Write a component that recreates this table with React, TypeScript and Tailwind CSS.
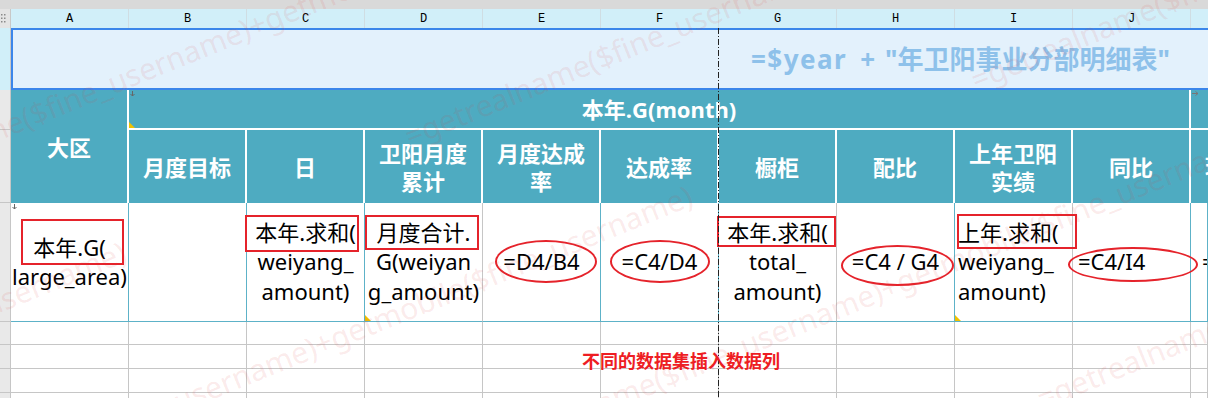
import React from 'react';

const WM = '=getrealname($fine_username)+getmobile($fine_username)';
const LETTERS = ['A', 'B', 'C', 'D', 'E', 'F', 'G', 'H', 'I', 'J'];

const rowHead = 'bg-[#e9e9e9] border-r border-b border-[#c6c6c6]';
const th =
  'bg-[#4eabc1] border-r-2 border-white flex flex-col items-center justify-center text-center text-white font-bold text-[22px] leading-[28px]';
const td =
  'relative border-r border-b border-b-[#5db2c8] flex flex-col justify-center text-[22px] leading-[29.5px] text-black';
const tealR = 'border-r-[#5db2c8]';
const grayR = 'border-r-[#c6c6c6]';
const redBox = 'absolute z-10 border-2 border-[#e5232b]';
const redOval = 'absolute z-10 border-2 border-[#e5232b] rounded-[50%]';

function DownMark() {
  return (
    <svg className="absolute left-[1px] top-[1px]" width="5" height="5" viewBox="0 0 5 5">
      <path d="M2.5 0V5M0.5 3L2.5 5L4.5 3" stroke="#666" strokeWidth="1" fill="none" />
    </svg>
  );
}

function RightMark() {
  return (
    <svg className="absolute left-[1px] top-[1px]" width="6" height="5" viewBox="0 0 6 5">
      <path d="M0 2.5H6M3.5 0.5L6 2.5L3.5 4.5" stroke="#777" strokeWidth="1" fill="none" />
    </svg>
  );
}

function Tri() {
  return (
    <span className="absolute left-0 bottom-0 w-0 h-0 border-b-[6px] border-b-[#f2c200] border-r-[6px] border-r-transparent" />
  );
}

function Grip() {
  return (
    <svg width="5" height="9" viewBox="0 0 5 9">
      <rect x="0" y="0" width="1.5" height="1.5" fill="#8a8a8a" />
      <rect x="3" y="0" width="1.5" height="1.5" fill="#8a8a8a" />
      <rect x="0" y="3.5" width="1.5" height="1.5" fill="#8a8a8a" />
      <rect x="3" y="3.5" width="1.5" height="1.5" fill="#8a8a8a" />
      <rect x="0" y="7" width="1.5" height="1.5" fill="#8a8a8a" />
      <rect x="3" y="7" width="1.5" height="1.5" fill="#8a8a8a" />
    </svg>
  );
}

function WmLine({ className, reps }: { className: string; reps: number }) {
  return (
    <div className={`absolute flex ${className}`}>
      {Array.from({ length: reps }).map((_, i) => (
        <div key={i} className="w-[1150px] shrink-0 whitespace-nowrap">
          {WM}
        </div>
      ))}
    </div>
  );
}

function Watermark() {
  return (
    <div className="pointer-events-none absolute inset-0 z-20 overflow-hidden">
      <div className="absolute left-0 top-0 origin-top-left rotate-[-22deg] text-[30px] leading-[36px] text-[rgba(220,60,60,0.11)] font-['Noto_Sans',sans-serif]">
        <WmLine className="left-[-1371px] top-[101px]" reps={3} />
        <WmLine className="left-[-1975px] top-[261px]" reps={4} />
        <WmLine className="left-[-1429px] top-[421px]" reps={3} />
        <WmLine className="left-[-2033px] top-[581px]" reps={4} />
        <WmLine className="left-[-1487px] top-[741px]" reps={4} />
      </div>
    </div>
  );
}

function EmptyRow() {
  return (
    <>
      <div className={rowHead} />
      {Array.from({ length: 11 }).map((_, i) => (
        <div key={i} className="border-r border-b border-[#c6c6c6]" />
      ))}
    </>
  );
}

export default function App() {
  return (
    <div className="relative w-[1208px] h-[398px] overflow-hidden bg-white font-['Noto_Sans','Noto_Sans_CJK_SC',sans-serif]">
      <div className="h-[9px] bg-[#d9d9d9]" />
      <div className="grid grid-cols-[11px_repeat(10,118px)_minmax(0,1fr)] grid-rows-[19px_62px_40px_73px_119px_23px_24px_24px_24px]">
        {/* column letters */}
        <div className="bg-[#e4e4e4] border-r border-[#c8c8c8] flex items-center pl-[1px]">
          <Grip />
        </div>
        {LETTERS.map((l) => (
          <div
            key={l}
            className="bg-[#d1eff9] border-r border-[#cfdde3] flex items-center justify-center font-['Liberation_Mono',monospace] text-[12px] text-black"
          >
            {l}
          </div>
        ))}
        <div className="bg-[#d1eff9]" />

        {/* row 1: title */}
        <div className="bg-[#d1eff9] border-r border-[#c8c8c8]" />
        <div className="col-span-11 min-w-0 bg-[#e3f1fc] border-y-2 border-l-2 border-[#3b86ea] flex items-center justify-end pr-[38px] text-[26px] font-bold text-[#8ec1ea] whitespace-nowrap">
          <span className="tracking-[1.5px]">=$year</span>
          <span className="ml-[13px]">+</span>
          <span className="ml-[10px]">"年卫阳事业分部明细表"</span>
        </div>

        {/* row 2 */}
        <div className={rowHead} />
        <div className={`row-span-2 ${th}`}>大区</div>
        <div className={`relative col-span-9 border-b-2 ${th}`}>
          本年.G(month)
          <DownMark />
          <Tri />
        </div>
        <div className="relative bg-[#4eabc1] border-b-2 border-white">
          <RightMark />
        </div>

        {/* row 3 */}
        <div className={rowHead} />
        <div className={th}>月度目标</div>
        <div className={th}>日</div>
        <div className={th}>
          <span>卫阳月度</span>
          <span>累计</span>
        </div>
        <div className={th}>
          <span>月度达成</span>
          <span>率</span>
        </div>
        <div className={th}>达成率</div>
        <div className={th}>橱柜</div>
        <div className={th}>配比</div>
        <div className={th}>
          <span>上年卫阳</span>
          <span>实绩</span>
        </div>
        <div className={th}>同比</div>
        <div className="min-w-0 overflow-hidden bg-[#4eabc1] flex items-center pl-[14px] text-white font-bold text-[22px] whitespace-nowrap">
          环比增长
        </div>

        {/* row 4: data */}
        <div className={rowHead} />
        <div className={`${td} ${tealR} items-center`}>
          <DownMark />
          <span>本年.G(</span>
          <span>large_area)</span>
          <div className={`${redBox} left-[10px] top-[16px] w-[103px] h-[46px]`} />
        </div>
        <div className={`${td} ${tealR}`} />
        <div className={`${td} ${tealR} items-center`}>
          <span>本年.求和(</span>
          <span>weiyang_</span>
          <span>amount)</span>
          <div className={`${redBox} left-[-2px] top-[12px] w-[114px] h-[37px]`} />
        </div>
        <div className={`${td} ${grayR} items-center`}>
          <span>月度合计.</span>
          <span>G(weiyan</span>
          <span>g_amount)</span>
          <div className={`${redBox} left-[0px] top-[12px] w-[114px] h-[35px]`} />
          <Tri />
        </div>
        <div className={`${td} ${tealR} items-center`}>
          <span>=D4/B4</span>
          <div className={`${redOval} left-[12px] top-[37px] w-[102px] h-[43px]`} />
        </div>
        <div className={`${td} ${tealR} items-center`}>
          <span>=C4/D4</span>
          <div className={`${redOval} left-[9px] top-[37px] w-[100px] h-[43px]`} />
        </div>
        <div className={`${td} ${grayR} items-center`}>
          <span>本年.求和(</span>
          <span>total_</span>
          <span>amount)</span>
          <div className={`${redBox} left-[-2px] top-[13px] w-[119px] h-[31px]`} />
        </div>
        <div className={`${td} ${tealR} items-center`}>
          <span>=C4 / G4</span>
          <div className={`${redOval} left-[4px] top-[42px] w-[113px] h-[41px]`} />
        </div>
        <div className={`${td} ${grayR} items-start pl-[3px]`}>
          <span>上年.求和(</span>
          <span>weiyang_</span>
          <span>amount)</span>
          <div className={`${redBox} left-[2px] top-[11px] w-[120px] h-[35px]`} />
          <Tri />
        </div>
        <div className={`${td} ${tealR} items-start pl-[5px]`}>
          <span>=C4/I4</span>
          <div className={`${redOval} left-[-5px] top-[44px] w-[130px] h-[35px]`} />
        </div>
        <div className={`${td} ${tealR} min-w-0 overflow-hidden items-start pl-[11px] whitespace-nowrap`}>
          <span>=C4/H4</span>
        </div>

        <EmptyRow />
        <EmptyRow />
        <EmptyRow />
        <EmptyRow />
      </div>

      {/* page break line */}
      <svg className="absolute left-[718px] top-[28px] z-10" width="1" height="370" viewBox="0 0 1 370">
        <line x1="0.5" y1="0" x2="0.5" y2="370" stroke="#222" strokeWidth="1" strokeDasharray="6 2 1 2" />
      </svg>

      <div className="absolute left-[582px] top-[350px] z-10 text-[18px] leading-[22px] font-bold text-[#ee1d23] whitespace-nowrap">
        不同的数据集插入数据列
      </div>

      <Watermark />
    </div>
  );
}
